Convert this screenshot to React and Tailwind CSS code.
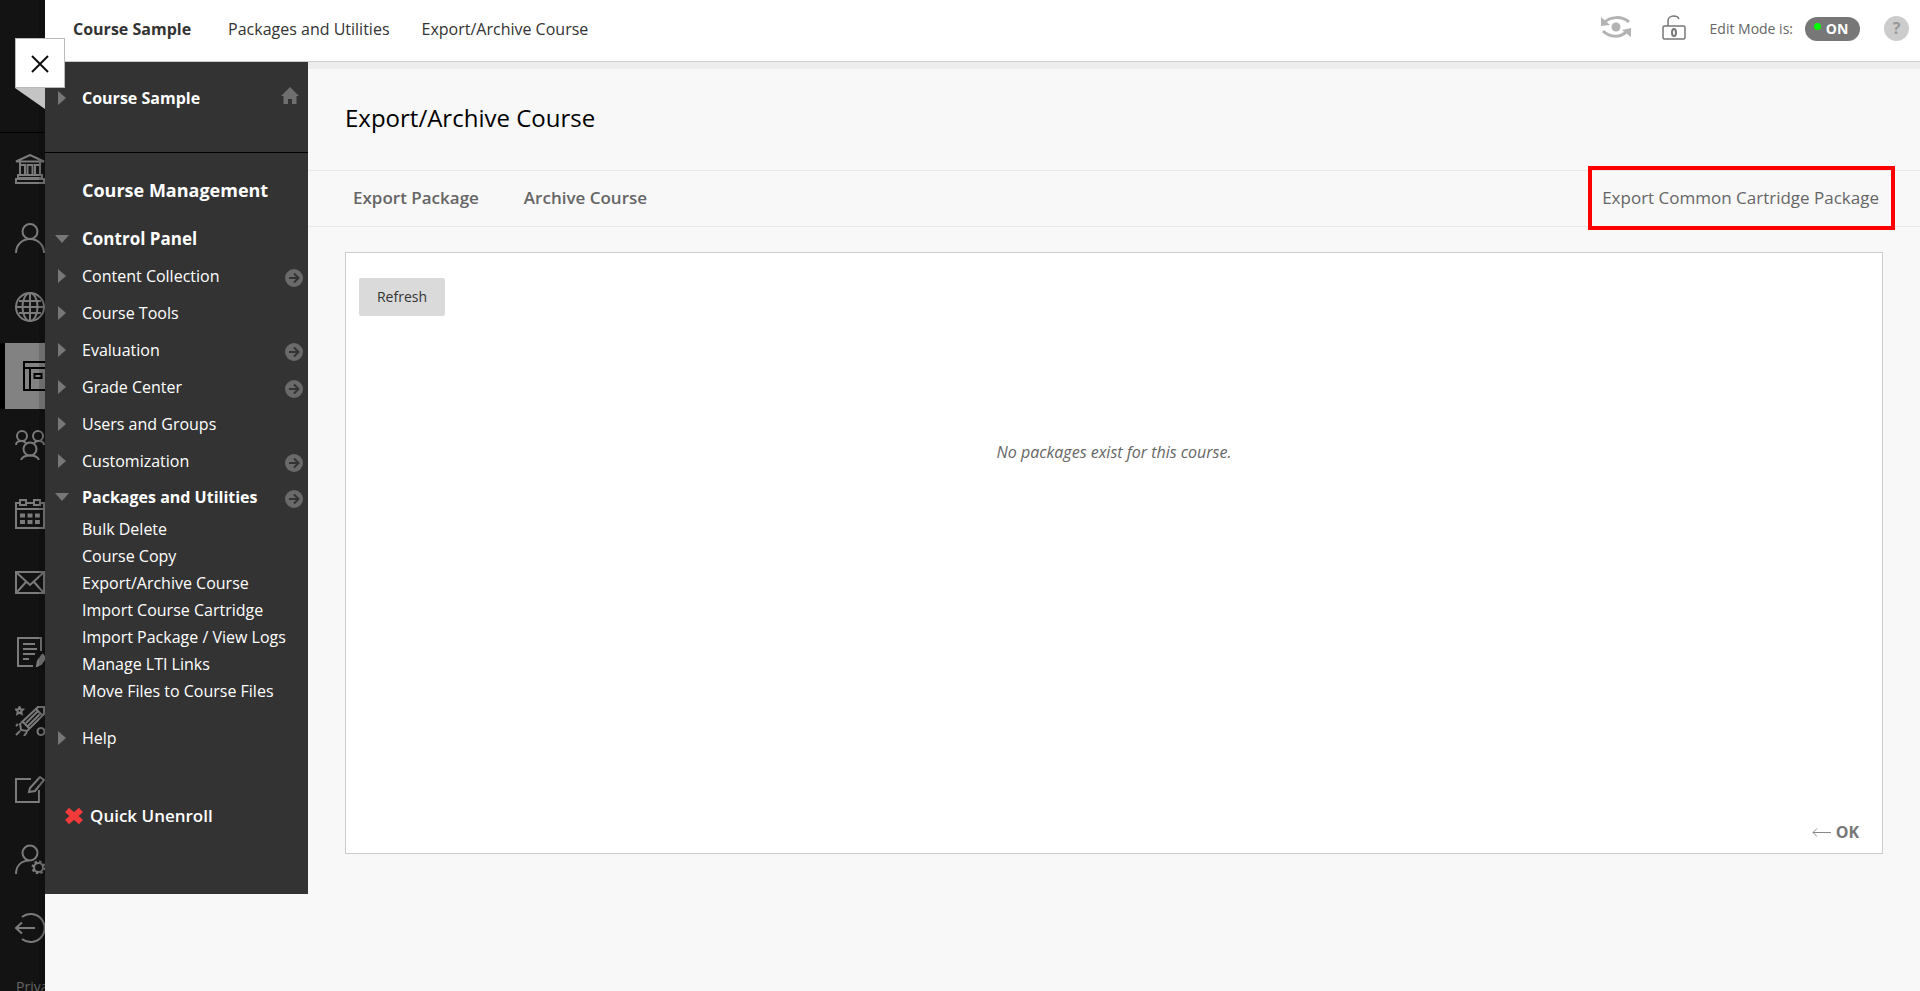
import React from 'react'
import clsx from 'clsx'

// 30x30 line icons for the global navigation rail
const icons = {
  institution: (
    <>
      <path d="M1 7.500 15 1l14 6.500H1ZM5 8v3M25 8v3M5 11h5v10H5zM12.500 11h5v10h-5zM20 11h5v10h-5zM3 21h24v3H3zM1 25h28v4H1z" />
    </>
  ),
  profile: (
    <>
      <circle cx="15" cy="8.500" r="7.500" />
      <path d="M1 30c0-8 6-14 14-14s14 6 14 14" />
    </>
  ),
  globe: (
    <>
      <circle cx="15" cy="15" r="14" />
      <ellipse cx="15" cy="15" rx="7.500" ry="14" />
      <path d="M15 1v28M1 15h28M4 9h22M4 21h22" />
    </>
  ),
  courses: (
    <>
      <path d="M1 1h28v28H1zM1 7h28M7 7v22M11.500 13h7v4h-7z" />
    </>
  ),
  groups: (
    <>
      <circle cx="7" cy="6" r="5" />
      <circle cx="23" cy="6" r="5" />
      <circle cx="15" cy="19" r="6.500" />
      <path d="M1 15c0-3 3-4.500 6-4 2 .3 3 1 4 2M29 15c0-3-3-4.500-6-4-2 .3-3 1-4 2M6 30c1-3 5-4.500 9-4.500s8 1.500 9 4.500" />
    </>
  ),
  calendar: (
    <>
      <path d="M4 4H1v25h28V4h-3M12 4h6M1 10h28M5 1h6v5H5zM19 1h6v5h-6z" />
      <path d="M5 16.500h5M12.500 16.500h5M20 16.500h5M5 23h5M12.500 23h5M20 23h5" strokeWidth="4" />
    </>
  ),
  messages: (
    <>
      <path d="M1 4h28v21H1zM2 5l13 12L28 5M2 24l9-10M28 24l-9-10" />
    </>
  ),
  grades: (
    <>
      <path d="M26 14V1H3v28h15M8 7h12M8 12h14M8 17h12M8 22h6" />
      <path d="m28 17-5 7-1 5 4-2 5-7" fill="currentColor" />
    </>
  ),
  tools: (
    <>
      <path d="m5 17 1 7 6 1L29 8V1h-6L6 17M8 16l6 6M11 17l12-12M13 20 25 8M21 3l6 6" />
      <circle cx="26" cy="25.500" r="3.500" />
      <path d="m4.500 1 1 2.200 2.500.3-1.800 1.800.5 2.500-2.200-1.200-2.200 1.200.5-2.500L1 3.500l2.500-.3zM3 18l-2 2M5 25l-4 4M12 26l-3 4" />
    </>
  ),
  compose: (
    <>
      <path d="M16 4H1v23h23V15M15 13l10-11 4 3-9 11-6 1z" />
    </>
  ),
  admin: (
    <>
      <circle cx="15" cy="9" r="7.500" />
      <path d="M1 30c0-8 5-13 13-13.500" />
      <circle cx="23.500" cy="23.500" r="4.500" />
      <circle cx="23.500" cy="23.500" r="5.500" strokeDasharray="2.300 2" strokeWidth="3" />
    </>
  ),
  signOut: (
    <>
      <path d="M7 4a14 14 0 1 1 0 22M20 15H1M7 9.500 1 15l6 5.500" />
    </>
  ),
}

const railItems = [
  { id: 'institution', label: 'Institution' },
  { id: 'profile', label: 'Profile' },
  { id: 'globe', label: 'Activity' },
  { id: 'courses', label: 'Courses', active: true },
  { id: 'groups', label: 'Organizations' },
  { id: 'calendar', label: 'Calendar' },
  { id: 'messages', label: 'Messages' },
  { id: 'grades', label: 'Grades' },
  { id: 'tools', label: 'Tools' },
  { id: 'compose', label: 'Compose' },
  { id: 'admin', label: 'Admin' },
  { id: 'signOut', label: 'Sign out' },
]

const panelItems = [
  { label: 'Content Collection', arrow: true },
  { label: 'Course Tools' },
  { label: 'Evaluation', arrow: true },
  { label: 'Grade Center', arrow: true },
  { label: 'Users and Groups' },
  { label: 'Customization', arrow: true },
]

const utilities = [
  'Bulk Delete',
  'Course Copy',
  'Export/Archive Course',
  'Import Course Cartridge',
  'Import Package / View Logs',
  'Manage LTI Links',
  'Move Files to Course Files',
]

function Rail() {
  return (
    <nav className="relative h-screen w-[45px] shrink-0 overflow-hidden bg-[#131313] text-[#7b7b7b]">
      <div className="h-[133px] border-b border-black" />
      <ul className="mt-[3px] flex flex-col gap-[3px]">
        {railItems.map((item) => (
          <li key={item.id}>
            <a
              href="#"
              aria-label={item.label}
              className={clsx(
                'flex h-[66px] w-[160px] items-center',
                item.active ? 'border-l-[5px] border-black bg-[#828282] pl-[18px] text-black' : 'pl-[15px]'
              )}
            >
              <svg width="30" height="30" viewBox="0 0 30 30" fill="none" stroke="currentColor" strokeWidth="2">
                {icons[item.id]}
              </svg>
            </a>
          </li>
        ))}
      </ul>
      <a href="#" className="mt-4 block pl-4 text-sm text-[#666]">Privacy</a>
      <div className="absolute inset-y-0 right-0 w-[6px] bg-black/15" />
    </nav>
  )
}

function Toggle({ open }) {
  return (
    <span className="flex w-[37px] shrink-0 justify-center pr-1 text-[#777]">
      {open ? (
        <svg width="14" height="8" viewBox="0 0 14 8"><path d="M0 0h14L7 8z" fill="currentColor" /></svg>
      ) : (
        <svg width="8" height="14" viewBox="0 0 8 14"><path d="M0 0v14l8-7z" fill="currentColor" /></svg>
      )}
    </span>
  )
}

function ArrowBadge() {
  return (
    <button type="button" aria-label="Open" className="mt-1 mr-[5px] ml-auto">
      <svg width="18" height="18" viewBox="0 0 18 18">
        <circle cx="9" cy="9" r="9" fill="#6a6a6a" />
        <path d="M4 9h9M9 4.500 13.500 9 9 13.500" fill="none" stroke="#333" strokeWidth="2" />
      </svg>
    </button>
  )
}

function MenuRow({ label, open, arrow, className = 'h-[37px]' }) {
  return (
    <div className={clsx('flex items-center', className)}>
      <Toggle open={open} />
      <a href="#">{label}</a>
      {arrow && <ArrowBadge />}
    </div>
  )
}

function Sidebar() {
  return (
    <aside className="w-[263px] shrink-0 self-start bg-[#333] pb-[60px] text-base text-white">
      <div className="h-[91px] border-b border-black pt-[17px]">
        <div className="flex h-[37px] items-center">
          <Toggle />
          <a href="#" className="font-bold">Course Sample</a>
          <a href="#" aria-label="Home" className="mr-[9px] mb-1 ml-auto text-[#6f6f6f]">
            <svg width="18" height="17" viewBox="0 0 18 17">
              <path d="M9 0 0 9h2.500v8H7v-5h4v5h4.500V9H18z" fill="currentColor" />
            </svg>
          </a>
        </div>
      </div>
      <h2 className="mt-[18px] mb-3 flex h-[37px] items-center pl-[37px] text-lg font-bold">Course Management</h2>
      <MenuRow label="Control Panel" open className="h-[37px] text-[17px] font-bold" />
      {panelItems.map((item) => (
        <MenuRow key={item.label} label={item.label} arrow={item.arrow} />
      ))}
      <MenuRow label="Packages and Utilities" open arrow className="h-[35px] font-bold" />
      <ul className="mt-[2px] pl-[37px]">
        {utilities.map((label) => (
          <li key={label} className="h-[27px] leading-[27px]">
            <a href="#">{label}</a>
          </li>
        ))}
      </ul>
      <div className="mt-[14px] mb-[41px]">
        <MenuRow label="Help" />
      </div>
      <button type="button" className="flex h-[37px] items-center gap-[6px] pl-[19px] text-[17px] font-semibold">
        <svg width="20" height="18" viewBox="0 0 20 18">
          <path d="m3 3 14 12M17 3 3 15" stroke="#f23a3a" strokeWidth="6" />
        </svg>
        Quick Unenroll
      </button>
    </aside>
  )
}

function Header() {
  return (
    <header className="flex h-[62px] items-center border-b border-[#ccc] bg-white pr-[11px] pb-1 pl-7 text-[#333]">
      <a href="#" className="font-bold">Course Sample</a>
      <a href="#" className="ml-[37px]">Packages and Utilities</a>
      <a href="#" className="ml-8">Export/Archive Course</a>
      <div className="ml-auto flex items-center text-sm text-[#666]">
        <button type="button" aria-label="Student preview" className="mr-[31px] pb-1">
          <svg width="30" height="22" viewBox="0 0 30 22" fill="none" stroke="#b3b3b3" strokeWidth="3">
            <path d="M3 7c6-7 18-7 25-1M2 15c7 7 18 7 24 0" />
            <circle cx="15" cy="11" r="4.500" fill="#b3b3b3" stroke="none" />
            <path d="M0 1v9l9-1zM30 21v-9l-9 2z" fill="#b3b3b3" stroke="none" />
          </svg>
        </button>
        <button type="button" aria-label="Open to guests" className="mr-6 pb-[3px]">
          <svg width="24" height="25" viewBox="0 0 24 25" fill="none" stroke="#777" strokeWidth="1.500">
            <rect x="1" y="11" width="22" height="13" rx="1.500" />
            <path d="M6 11V6c0-3 2.500-5 5.500-5 3 0 5 1.500 5.500 3" />
            <ellipse cx="12" cy="17.500" rx="2" ry="3.500" strokeWidth="2" />
          </svg>
        </button>
        <span id="edit-mode">Edit Mode is:</span>
        <button
          type="button"
          aria-labelledby="edit-mode"
          className="relative mr-6 ml-3 h-6 w-[55px] rounded-full bg-[#777] pl-[9px] text-sm leading-6 font-bold text-white"
        >
          <span className="absolute top-[6px] left-[9px] size-[7px] rounded-full bg-[#0f0]" />
          ON
        </button>
        <button type="button" aria-label="Help" className="size-[25px] rounded-full bg-[#ccc] text-base leading-[25px] font-bold text-[#999]">
          ?
        </button>
      </div>
    </header>
  )
}

function Content() {
  return (
    <main className="flex-1 border-t-[7px] border-[#ededed] text-[#666]">
      <h1 className="flex h-[101px] items-center pb-1 pl-[37px] text-2xl text-black">Export/Archive Course</h1>
      <div className="flex h-[57px] items-center border-y border-[#e8e8e8] pr-[25px] pb-[2px] pl-[45px] text-[17px] font-semibold">
        <a href="#">Export Package</a>
        <a href="#" className="ml-[45px]">Archive Course</a>
        <a
          href="#"
          className="-my-1 ml-auto flex h-16 items-center border-4 border-[#f00] pr-3 pl-[10px] font-normal"
        >
          Export Common Cartridge Package
        </a>
      </div>
      <section className="mt-[25px] mr-[37px] ml-[37px] flex h-[602px] flex-col border border-[#ccc] bg-white">
        <button type="button" className="mt-[25px] ml-[13px] h-[38px] w-[86px] rounded-xs bg-[#dadada] text-sm text-[#333]">
          Refresh
        </button>
        <p className="mt-[124px] text-center italic">No packages exist for this course.</p>
        <a href="#" className="mt-auto mr-[23px] mb-[9px] flex items-center gap-[5px] self-end font-bold text-[#777]">
          <svg width="19" height="9" viewBox="0 0 19 9" fill="none" stroke="#888">
            <path d="M19 4.500H1M5 .5l-4 4 4 4" />
          </svg>
          OK
        </a>
      </section>
    </main>
  )
}

export default function App() {
  return (
    <div className="relative flex min-h-screen bg-[#f8f8f8] font-['Open_Sans',sans-serif] text-base">
      <Rail />
      <div className="min-w-0 flex-1">
        <Header />
        <div className="flex">
          <Sidebar />
          <Content />
        </div>
      </div>
      {/* close tab sits over the rail and the course menu */}
      <div className="absolute top-[38px] left-[15px]">
        <button type="button" aria-label="Close" className="flex size-[50px] items-center justify-center border border-[#bbb] bg-white pt-[2px]">
          <svg width="18" height="18" viewBox="0 0 18 18" fill="none" stroke="#111" strokeWidth="2">
            <path d="m1 1 16 16M17 1 1 17" />
          </svg>
        </button>
        <svg width="30" height="21" viewBox="0 0 30 21">
          <path d="M0 0h30v21z" fill="#c4c4c4" />
        </svg>
      </div>
    </div>
  )
}
